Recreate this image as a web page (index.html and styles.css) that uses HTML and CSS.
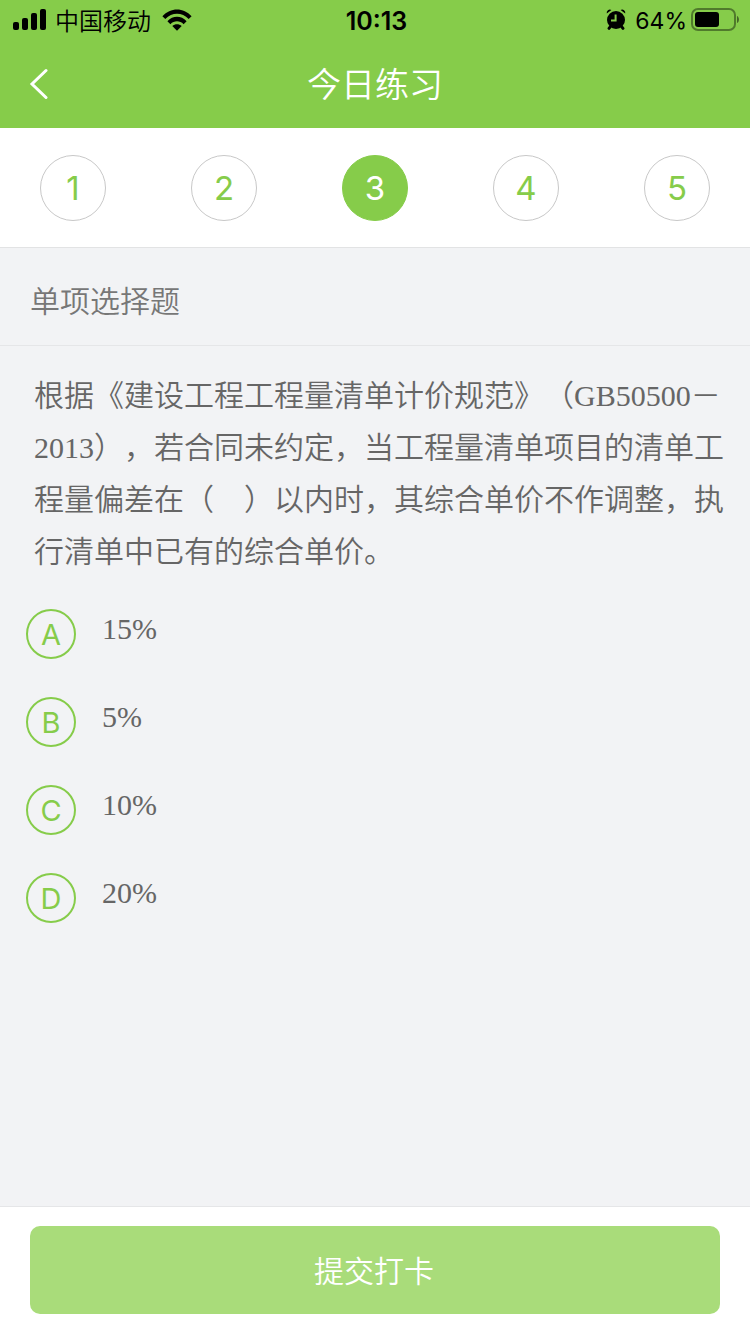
FILE: index.html
```html
<!DOCTYPE html>
<html lang="zh-CN">
<head>
<meta charset="utf-8">
<meta name="viewport" content="width=device-width, initial-scale=1">
<title>今日练习</title>
<link rel="stylesheet" href="styles.css">
</head>
<body>
<div class="status">
  <div class="status-left">
    <svg class="signal" width="34" height="22" viewBox="0 0 34 22" aria-hidden="true">
      <rect x="0" y="13" width="6" height="8" rx="2"/>
      <rect x="9" y="9" width="6" height="12" rx="2"/>
      <rect x="18" y="4" width="6" height="17" rx="2"/>
      <rect x="27" y="0" width="6" height="21" rx="2"/>
    </svg>
    <span class="carrier">中国移动</span>
    <svg class="wifi" width="30" height="22" viewBox="0 0 30 22" aria-hidden="true">
      <path d="M0.4 7.2C8.5-1.9 21.5-1.9 29.6 7.2L26.7 10.1C20.1 3.1 9.9 3.1 3.3 10.1Z"/>
      <path d="M5.4 12.2C10.8 6.4 19.2 6.4 24.6 12.2L21.6 15.2C17.8 11.4 12.2 11.4 8.4 15.2Z"/>
      <path d="M10.3 17.1C13 14.6 17 14.6 19.7 17.1L15 21.8Z"/>
    </svg>
  </div>
  <time class="clock">10:13</time>
  <div class="status-right">
    <svg class="alarm" width="20" height="22" viewBox="0 0 20 22" aria-hidden="true">
      <circle cx="10" cy="11" r="9"/>
      <path d="M0.8 4.6A3.2 3.2 0 0 1 5.4 1ZM19.2 4.6A3.2 3.2 0 0 0 14.6 1Z"/>
      <path class="alarm-feet" d="M4.4 17.6L3 19.4M15.6 17.6L17 19.4"/>
      <path class="alarm-hands" d="M9.6 5.6V11.6H5"/>
    </svg>
    <span class="percent">64%</span>
    <svg class="battery" width="49" height="24" viewBox="0 0 49 24" aria-hidden="true">
      <rect class="battery-shell" x="1" y="1" width="43" height="21" rx="6"/>
      <rect x="4" y="4" width="24" height="15" rx="3"/>
      <path class="battery-tip" d="M46 8C48.6 9 48.6 14 46 15Z"/>
    </svg>
  </div>
</div>

<header class="header">
  <button class="back" type="button" aria-label="返回">
    <svg width="20" height="32" viewBox="0 0 20 32" aria-hidden="true"><path d="M18 2.5L4 16L18 29.5"/></svg>
  </button>
  <h1 class="title">今日练习</h1>
</header>

<nav class="steps" aria-label="题号">
  <button class="step" type="button">1</button>
  <button class="step" type="button">2</button>
  <button class="step step-current" type="button" aria-current="step">3</button>
  <button class="step" type="button">4</button>
  <button class="step" type="button">5</button>
</nav>

<main class="main">
  <h2 class="kind">单项选择题</h2>
  <p class="question" id="question">根据《建设工程工程量清单计价规范》（GB50500－2013），若合同未约定，当工程量清单项目的清单工程量偏差在（　）以内时，其综合单价不作调整，执行清单中已有的综合单价。</p>
  <div class="options" role="radiogroup" aria-labelledby="question">
    <label class="option"><input class="option-input" type="radio" name="answer" value="A"><span class="option-letter">A</span><span class="option-text">15%</span></label>
    <label class="option"><input class="option-input" type="radio" name="answer" value="B"><span class="option-letter">B</span><span class="option-text">5%</span></label>
    <label class="option"><input class="option-input" type="radio" name="answer" value="C"><span class="option-letter">C</span><span class="option-text">10%</span></label>
    <label class="option"><input class="option-input" type="radio" name="answer" value="D"><span class="option-letter">D</span><span class="option-text">20%</span></label>
  </div>
</main>

<footer class="footer">
  <button class="submit" type="button">提交打卡</button>
</footer>
</body>
</html>
```

FILE: styles.css
```css
:root {
  --green: #86cc4a;
  --ui: Inter, "Noto Sans CJK SC", sans-serif;
  --cjk: "Noto Sans CJK SC", sans-serif;
}

* {
  box-sizing: border-box;
}

body {
  margin: 0;
  min-height: 100vh;
  display: flex;
  flex-direction: column;
  background: #f2f3f5;
  font-family: var(--ui);
}

button {
  margin: 0;
  padding: 0;
  border: 0;
  background: none;
  font: inherit;
  cursor: pointer;
}

.status {
  display: grid;
  grid-template-columns: 1fr auto 1fr;
  align-items: center;
  height: 40px;
  padding: 0 10px 0 13px;
  background: var(--green);
  color: #000;
  font-size: 24px;
  line-height: 38px;
}

.status-left,
.status-right {
  display: flex;
  align-items: center;
}

.status-left {
  gap: 8px;
}

.status-right {
  justify-content: flex-end;
  gap: 4px;
}

.carrier {
  font-family: var(--cjk);
  font-weight: 350;
}

.wifi {
  margin-left: 3px;
}

.clock {
  padding-top: 2px;
  font-size: 25px;
  font-weight: 600;
}

.alarm {
  margin-right: 5px;
}

.alarm-feet {
  stroke: #000;
  stroke-width: 3;
  stroke-linecap: round;
}

.alarm-hands {
  fill: none;
  stroke: var(--green);
  stroke-width: 2;
}

.percent {
  padding-top: 2px;
  font-size: 23px;
}

.battery-shell {
  fill: none;
  stroke: #000;
  stroke-opacity: 0.4;
  stroke-width: 2;
}

.battery-tip {
  fill-opacity: 0.5;
}

.header {
  display: grid;
  grid-template-columns: 1fr auto 1fr;
  align-items: center;
  height: 88px;
  padding: 0 28px;
  background: var(--green);
  color: #fff;
}

.back {
  display: flex;
  justify-self: start;
}

.back path {
  fill: none;
  stroke: #fff;
  stroke-width: 3;
  stroke-linecap: round;
}

.title {
  margin: 0;
  font-family: var(--cjk);
  font-size: 34px;
  font-weight: 350;
  line-height: 46px;
  padding-bottom: 2px;
}

.steps {
  display: flex;
  justify-content: space-between;
  padding: 27px 40px 26px;
  border-bottom: 1px solid #e2e3e4;
  background: #fff;
}

.step {
  width: 66px;
  height: 66px;
  padding-top: 1px;
  border: 1px solid #c8c8c8;
  border-radius: 50%;
  color: var(--green);
  font-size: 33px;
  line-height: 63px;
}

.step-current {
  border-color: var(--green);
  background: var(--green);
  color: #fff;
}

.main {
  flex: 1;
}

.kind {
  margin: 0;
  padding: 27px 30px 22px;
  border-bottom: 1px solid #e5e6e8;
  color: #777;
  font-family: var(--cjk);
  font-size: 30px;
  font-weight: 350;
  line-height: 48px;
}

.question {
  margin: 0;
  padding: 24px 24px 0 34px;
  color: #666;
  font-family: "Liberation Serif", "Noto Sans CJK SC", serif;
  font-size: 30px;
  font-weight: 350;
  line-height: 52px;
  text-spacing-trim: space-all;
}

.options {
  display: flex;
  flex-direction: column;
  gap: 38px;
  padding: 31px 26px;
}

.option {
  position: relative;
  display: flex;
  gap: 26px;
  cursor: pointer;
}

.option-input {
  position: absolute;
  width: 50px;
  height: 50px;
  margin: 0;
  opacity: 0;
}

.option-letter {
  width: 50px;
  height: 50px;
  border: 2px solid var(--green);
  border-radius: 50%;
  color: var(--green);
  font-size: 29px;
  line-height: 48px;
  text-align: center;
}

.option-text {
  color: #666;
  font-family: "Liberation Serif", "Noto Sans CJK SC", serif;
  font-size: 30px;
  line-height: 40px;
}

.option-input:checked + .option-letter {
  background: var(--green);
  color: #fff;
}

.footer {
  padding: 19px 30px 20px;
  border-top: 1px solid #e5e6e8;
  background: #fff;
}

.submit {
  width: 100%;
  height: 88px;
  padding: 0 2px 2px 0;
  border-radius: 10px;
  background: #a9dc7a;
  color: #fff;
  font-family: var(--cjk);
  font-size: 30px;
  font-weight: 350;
}
```
